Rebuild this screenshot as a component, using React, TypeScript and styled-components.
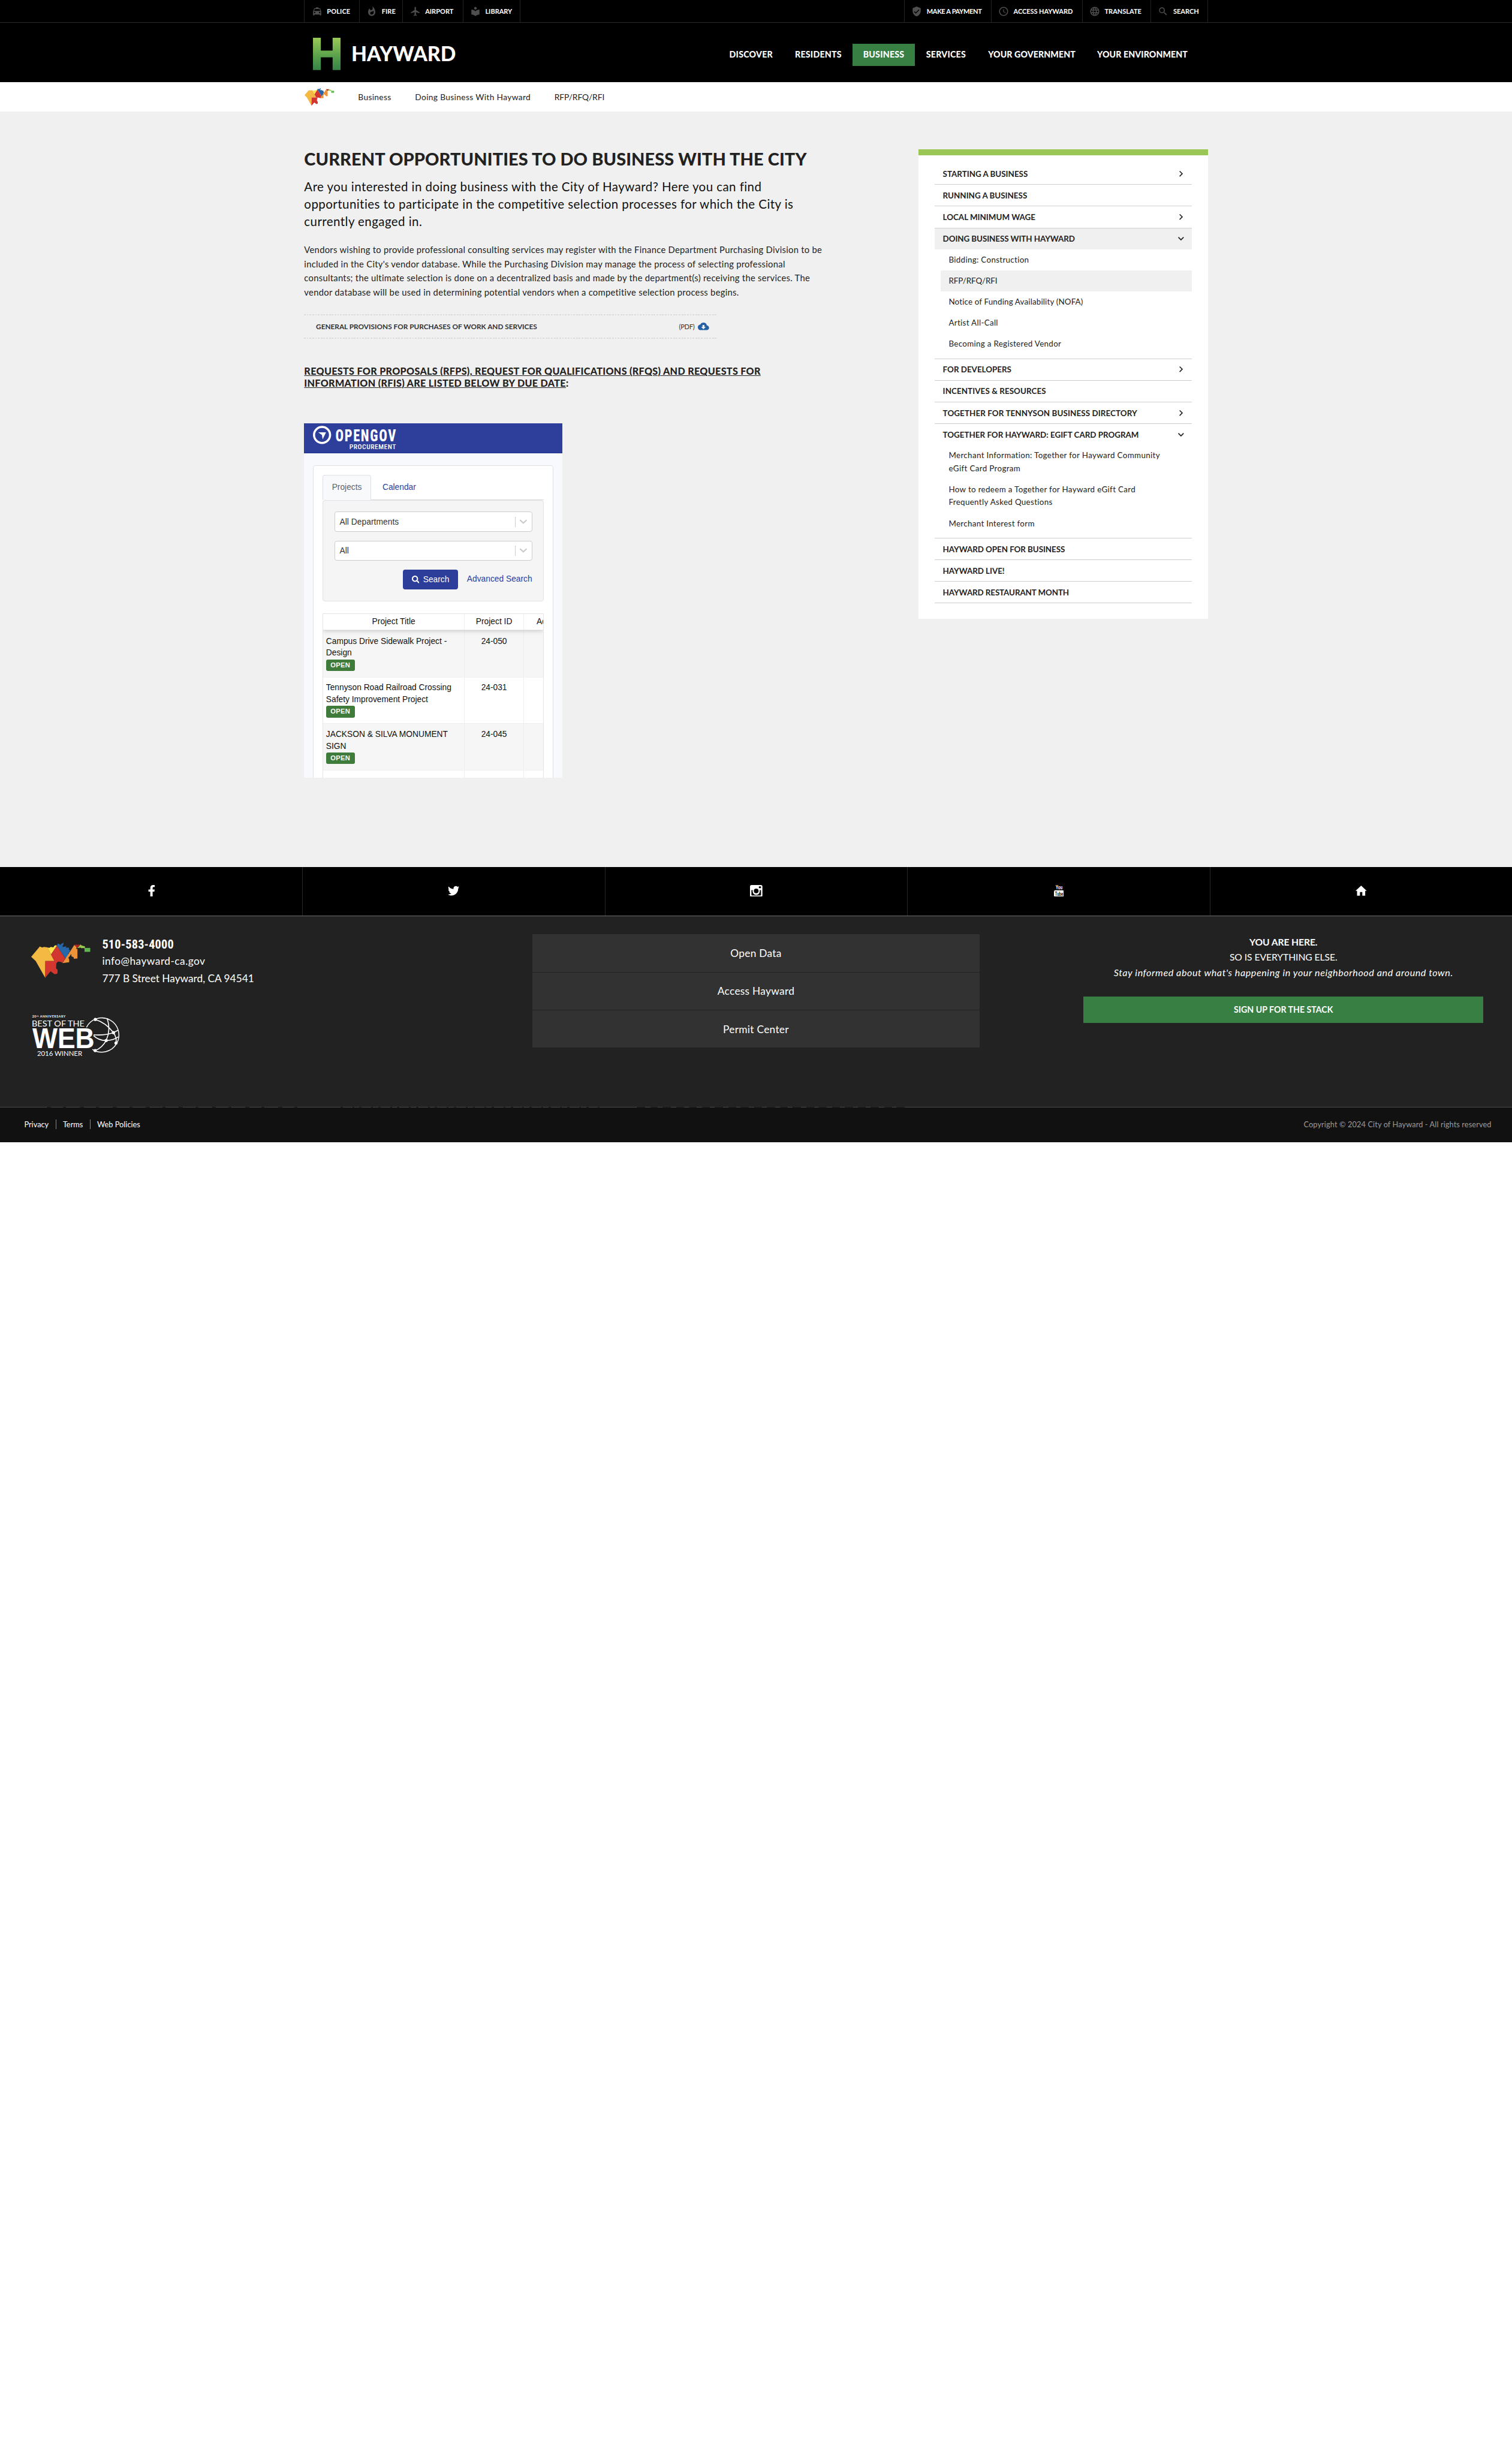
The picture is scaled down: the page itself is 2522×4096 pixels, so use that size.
import React from 'react';
import styled, { createGlobalStyle, css } from 'styled-components';
import type { IconType } from 'react-icons';
import {
  MdLocalTaxi,
  MdWhatshot,
  MdFlight,
  MdLocalLibrary,
  MdVerifiedUser,
  MdAccessTime,
  MdLanguage,
  MdSearch,
  MdCloudDownload,
  MdKeyboardArrowRight,
  MdKeyboardArrowDown,
} from 'react-icons/md';
import { FaFacebookF, FaTwitter, FaSearch } from 'react-icons/fa';

const GlobalStyle = createGlobalStyle`
  html, body { margin: 0; padding: 0; background: #fff; overflow: hidden; }
  *, *::before, *::after { box-sizing: border-box; }
  h1, h2, p, ul { margin: 0; padding: 0; font-weight: inherit; font-size: inherit; }
  ul { list-style: none; }
`;

const Page = styled.div`
  width: 2560px;
  height: 4158px;
  zoom: 0.98516;
  background: #fff;
  color: #222;
  font-family: Lato, 'Open Sans', sans-serif;
  font-size: 15px;
`;

const Container = styled.div`
  width: 1530px;
  margin: 0 auto;
  display: flex;
  justify-content: space-between;
`;

/* ---------- top utility bar ---------- */

const UtilityBar = styled.div`
  background: #000;
  height: 39px;
  border-bottom: 1px solid #2b2b2b;
`;

const UtilityGroup = styled.div`
  display: flex;
  height: 38px;
  border-right: 1px solid #222;
`;

const UtilityLink = styled.a<{ $w: number; $ls?: number }>`
  width: ${(p) => p.$w}px;
  padding-left: 11.5px;
  display: flex;
  align-items: center;
  gap: 7.6px;
  border-left: 1px solid #222;
  color: #fff;
  font-size: 11.2px;
  font-weight: 700;
  letter-spacing: ${(p) => p.$ls ?? 0}px;
  white-space: nowrap;

  svg {
    width: 18.3px;
    height: 18.3px;
    flex: none;
    color: #4f4f4f;
  }
`;

/* ---------- main header ---------- */

const Header = styled.header`
  background: #000;
  height: 100px;
`;

const HeaderInner = styled(Container)`
  height: 100px;
  align-items: center;
  padding: 0 16px 0 15px;
`;

const LogoArt = styled.svg`
  display: block;
  margin-top: 5px;
  overflow: visible;
`;

const Nav = styled.nav`
  display: flex;
  margin-top: 7px;
`;

const NavLink = styled.a<{ $w: number; $active?: boolean; $ls?: number }>`
  width: ${(p) => p.$w}px;
  height: 37.5px;
  display: flex;
  align-items: center;
  justify-content: center;
  color: #fff;
  background: ${(p) => (p.$active ? '#387f44' : 'transparent')};
  font-size: 14.4px;
  font-weight: 900;
  letter-spacing: ${(p) => p.$ls ?? 0.1}px;
  white-space: nowrap;
  padding-bottom: 1.6px;
`;

/* ---------- breadcrumb ---------- */

const CrumbBar = styled.div`
  height: 50px;
  background: #fff;
`;

const CrumbList = styled.div`
  width: 1530px;
  height: 50px;
  margin: 0 auto;
  display: flex;
  align-items: center;
  gap: 40.3px;
  font-size: 14px;

  svg {
    margin-left: 1px;
  }
`;

const Crumb = styled.span<{ $ls?: number }>`
  letter-spacing: ${(p) => p.$ls ?? 0.34}px;
`;

/* ---------- body ---------- */

const Main = styled.main`
  height: 1279px;
  background: #f0f0f0;
`;

const Article = styled.article`
  width: 890px;
  padding-top: 61.5px;
`;

const Title = styled.h1`
  font-size: 29.4px;
  line-height: 36px;
  font-weight: 900;
  letter-spacing: 0.1px;
  text-transform: uppercase;
  white-space: nowrap;
`;

const Lead = styled.p`
  margin-top: 14.6px;
  font-size: 20.8px;
  line-height: 29.7px;
  letter-spacing: 0.45px;
  color: #111;
  white-space: nowrap;
`;

const Paragraph = styled.p`
  margin-top: 21.1px;
  font-size: 15px;
  line-height: 24px;
  letter-spacing: 0.29px;
  white-space: nowrap;
`;

const dashes = css`
  repeating-linear-gradient(90deg, #dcdcdc 0 2.9px, transparent 2.9px 4.7px)
`;

const DocumentRow = styled.a`
  margin-top: 24.8px;
  width: 700px;
  height: 41px;
  padding: 0 14px 0 20px;
  display: flex;
  align-items: center;
  justify-content: space-between;
  font-size: 12px;
  font-weight: 700;
  color: #333;
  background:
    ${dashes} 0 0 / 100% 2px no-repeat,
    ${dashes} 0 100% / 100% 2px no-repeat;
`;

const DocumentType = styled.span`
  display: flex;
  align-items: center;
  gap: 6px;
  font-weight: 400;
  font-size: 11.2px;
  letter-spacing: -0.2px;

  svg {
    width: 19px;
    height: 19px;
    color: #2560a6;
  }
`;

const SectionTitle = styled.h2`
  margin-top: 45.4px;
  font-size: 16.4px;
  line-height: 20px;
  font-weight: 900;
  letter-spacing: 0.32px;
  white-space: nowrap;

  span {
    text-decoration: underline;
    text-decoration-thickness: 1.5px;
    text-underline-offset: 1.5px;
  }
`;

/* ---------- embedded procurement portal ---------- */

const Portal = styled.section`
  margin-top: 58.2px;
  width: 437px;
  height: 600px;
  overflow: hidden;
  background: #f7f9fc;
  font-family: 'Liberation Sans', Arial, sans-serif;
  font-size: 14px;
  line-height: 20px;
`;

const PortalHeader = styled.div`
  height: 51px;
  background: #2d3e9b;
  border-bottom: 1.1px solid #21368a;
  padding: 4px 15px;
`;

const PortalCard = styled.div`
  margin: 20.2px 15px 0;
  padding: 15.4px 15px 0;
  height: 560px;
  background: #fff;
  border: 1.1px solid #dee2e6;
  border-radius: 4px;
`;

const Tabs = styled.div`
  display: flex;
  height: 42px;
  border-bottom: 1.1px solid #d9d9d9;
`;

const Tab = styled.a<{ $active?: boolean }>`
  height: 42px;
  padding: 10px 15px 0;
  border: 1.1px solid transparent;
  border-radius: 4px 4px 0 0;
  color: #2c3e9e;
  margin-right: 3px;
  ${(p) =>
    p.$active &&
    css`
      color: #5d636b;
      background: #f8f9fb;
      border-color: #dee2e6;
      border-bottom-color: #f8f9fb;
    `}
`;

const Filters = styled.div`
  height: 171.4px;
  padding: 19px 19px 0;
  background: #f5f5f5;
  border: 1.1px solid #e0e2e5;
  border-radius: 4px;
`;

const SelectBox = styled.div`
  height: 34px;
  margin-bottom: 15px;
  padding: 1px 7px 0 8px;
  display: flex;
  align-items: center;
  background: #fff;
  border: 1.1px solid #ccc;
  border-radius: 4px;
  color: #333;
  letter-spacing: 0.05px;

  svg {
    margin-left: 6px;
  }
`;

const SelectDivider = styled.i`
  width: 1px;
  height: 17px;
  margin-left: auto;
  background: #ccc;
`;

const FilterActions = styled.div`
  display: flex;
  justify-content: flex-end;
  gap: 15.5px;
  color: #2c3e9e;
  line-height: 32px;
`;

const SearchButton = styled.span`
  width: 92.5px;
  height: 34px;
  display: flex;
  align-items: center;
  justify-content: center;
  gap: 6.5px;
  border-radius: 4px;
  background: #2c3e9a;
  color: #fff;
`;

const ProjectTable = styled.div`
  margin-top: 20.4px;
  height: 300px;
  border: 1.1px solid #e4e4e4;
  border-width: 1.1px 1.1px 0;
  overflow: hidden;
`;

const tableColumns = css`
  display: grid;
  grid-template-columns: 240px 100px 120px;
`;

const TableHead = styled.div`
  ${tableColumns}
  height: 27.8px;
  position: relative;
  background: #fff;
  border-bottom: 1.1px solid #eaeaea;
  box-shadow: 0 3px 7px rgba(0, 0, 0, 0.14);
  color: #111;
  text-align: center;
  line-height: 26px;
`;

const HeadCell = styled.span<{ $clipped?: boolean }>`
  border-right: 1px solid #eee;
  ${(p) =>
    p.$clipped &&
    css`
      text-align: left;
      padding-left: 21.5px;
      white-space: nowrap;
    `}
`;

const TableRow = styled.div<{ $alt?: boolean }>`
  ${tableColumns}
  height: 78.8px;
  background: ${(p) => (p.$alt ? '#fff' : '#f6f6f6')};
  border-top: 1px solid ${(p) => (p.$alt ? '#f1f1f1' : '#eee')};
  color: #111;
`;

const TitleCell = styled.div`
  padding: 7.8px 6px 0 5px;
  border-right: 1px solid #eee;
`;

const IdCell = styled.div`
  padding-top: 7.8px;
  text-align: center;
  border-right: 1px solid #eee;
`;

const Status = styled.div`
  width: 48.7px;
  height: 20px;
  margin-top: 0.5px;
  border-radius: 3px;
  background: #3f7b3a;
  color: #fff;
  font-size: 11.3px;
  font-weight: 700;
  letter-spacing: 0.35px;
  line-height: 20px;
  text-align: center;
`;

/* ---------- side navigation ---------- */

const Sidebar = styled.aside`
  width: 490px;
  height: 794.7px;
  margin-top: 64px;
  padding: 13.2px 27.3px 0;
  background: #fff;
  border-top: 10.2px solid #99c655;
`;

const SideItem = styled.li`
  border-bottom: 1.1px solid #cfcfcf;
`;

const SideLink = styled.a<{ $active?: boolean; $ls?: number }>`
  height: 35.65px;
  padding: 0 8.5px 0 14px;
  display: flex;
  align-items: center;
  justify-content: space-between;
  font-size: 13.6px;
  font-weight: 700;
  letter-spacing: ${(p) => p.$ls ?? 0}px;
  background: ${(p) => (p.$active ? '#f0f0f0' : 'transparent')};

  svg {
    width: 20px;
    height: 20px;
  }
`;

const SubList = styled.ul`
  padding: 0 0 6.4px 10px;
`;

const SubLink = styled.li<{ $active?: boolean; $ls?: number }>`
  padding: 7px 14px 6.8px;
  font-size: 13.6px;
  line-height: 21.9px;
  letter-spacing: ${(p) => p.$ls ?? 0.32}px;
  background: ${(p) => (p.$active ? '#f0f0f0' : 'transparent')};
  white-space: nowrap;
`;

/* ---------- footer ---------- */

const SocialBar = styled.div`
  height: 83px;
  display: grid;
  grid-template-columns: repeat(5, 1fr);
  background: #000;
  border-bottom: 1.1px solid #6e6e6e;
`;

const SocialLink = styled.a`
  display: flex;
  align-items: center;
  justify-content: center;
  padding-bottom: 2.4px;
  color: #fff;
  border-left: 1px solid #262626;

  &:first-child {
    border-left-color: transparent;
  }
`;

const FooterMain = styled.footer`
  height: 323px;
  display: grid;
  grid-template-columns: 901px 758px 1fr;
  background: #222;
  color: #fff;
`;

const ContactColumn = styled.div`
  padding: 33px 0 0 53px;
`;

const Contact = styled.div`
  display: flex;
  gap: 20px;
  height: 132.7px;

  svg {
    margin-top: 12px;
  }
`;

const ContactLines = styled.div`
  padding-top: 0.6px;
  font-size: 17.6px;
  line-height: 28.7px;
`;

const Phone = styled.div`
  font-family: 'Roboto Condensed', Roboto, sans-serif;
  font-weight: 700;
  font-size: 20.6px;
  letter-spacing: 0.2px;
`;

const Email = styled.div`
  letter-spacing: 0.46px;
`;

const Address = styled.div`
  letter-spacing: -0.03px;
`;

const LinkColumn = styled.div`
  padding-top: 31px;
`;

const FooterLink = styled.a`
  height: 64.2px;
  display: flex;
  align-items: center;
  justify-content: center;
  background: #323232;
  border-bottom: 1.1px solid #232323;
  font-size: 17.6px;
  letter-spacing: 0.28px;
`;

const SignupColumn = styled.div`
  padding: 30.6px 48.4px 0 175.4px;
  text-align: center;
  font-size: 16px;
  line-height: 25.6px;
  white-space: nowrap;
`;

const SignupHeading = styled.div`
  font-weight: 700;
  letter-spacing: -0.15px;
`;

const SignupSub = styled.div`
  letter-spacing: -0.11px;
`;

const SignupNote = styled.div`
  font-style: italic;
  font-size: 16.4px;
  letter-spacing: 0.57px;
`;

const SignupButton = styled.a`
  margin-top: 28.8px;
  height: 44.6px;
  display: flex;
  align-items: center;
  justify-content: center;
  background: #387f44;
  font-size: 14.4px;
  font-weight: 700;
`;

const LegalBar = styled.div`
  height: 60px;
  padding: 0 35px 1.4px 41px;
  display: flex;
  align-items: center;
  justify-content: space-between;
  font-size: 13px;
  color: #fff;
  background:
    repeating-linear-gradient(90deg, transparent 0 23px, #222 23px 30px, transparent 30px 51px, #222 51px 56px)
      56px 0 / 450px 1px no-repeat,
    repeating-linear-gradient(90deg, transparent 0 9px, #222 9px 13px, transparent 13px 29px, #222 29px 32px)
      567px 0 / 453px 1px no-repeat,
    repeating-linear-gradient(90deg, #222 0 14px, transparent 14px 23px, #222 23px 36px, transparent 36px 44px)
      1078px 0 / 454px 1px no-repeat,
    linear-gradient(#4a4a4a, #4a4a4a) 0 0 / 100% 1px no-repeat,
    #111;
`;

const LegalLinks = styled.div`
  display: flex;
  align-items: center;

  a + a {
    margin-left: 11.5px;
    padding-left: 11.5px;
    border-left: 1px solid #8a8a8a;
  }
`;

const Copyright = styled.span`
  color: #9a9a9a;
  letter-spacing: 0.09px;
`;

/* ---------- drawings ---------- */

const CityMap = ({ width }: { width: number }) => (
  <svg width={width} height={width * 0.6} viewBox="0 0 300 180">
    <path fill="#f4b942" d="M0 72 44 20l12 5 8-3 19 2 35 70H72v86L23 94z" />
    <path fill="#fce34b" d="m83 25 10 2 6-5 14 2 5-8 9-3 3 4-29 43z" />
    <path fill="#d2362f" d="m131 15 42 66-14 22-8-5-23-3-10-1-17-32z" />
    <path fill="#d2362f" d="M72 94h68l-12 10-2 26 8 8v16l-10 7-12-9-14-6-28 34z" />
    <path fill="#d2362f" d="m104 150 14-14 14 6v16l-14 2z" />
    <path fill="#2766a8" d="m131 17 3-11 9 1 4 5 8-7 10-5-2 12-6 6 8 4 14-4-3 9 9-2 8 2-2 8 8 4-6 8 8 2-14 6 4 6-16 21z" />
    <path fill="#ec9239" d="m196 48 23-36 12 10-2 10 6 1v48l-18 1-2-8-10-4-2-12-8 12-6 6 4 10v14l-34 4 16-24 12-18z" />
    <path fill="#aa2320" d="M218 11h33l-15 18z" />
    <path fill="#9bcb4e" d="m251 10 6 5 16 4v9h-20l-2-3-16 3z" />
    <path fill="#5fb64d" d="M271 27h29v20h-29z" />
  </svg>
);

const HaywardLogo = () => (
  <LogoArt width="250" height="55" viewBox="0 0 250 55">
    <defs>
      <linearGradient id="leaf" gradientUnits="userSpaceOnUse" x1="0" y1="0" x2="0" y2="55">
        <stop offset="0" stopColor="#9bca57" />
        <stop offset="0.6" stopColor="#559e4b" />
        <stop offset="1" stopColor="#388348" />
      </linearGradient>
    </defs>
    <g fill="url(#leaf)">
      <rect x="0" y="0" width="13.3" height="54.6" />
      <rect x="13" y="21.7" width="21" height="11.4" />
      <rect x="33.3" y="0" width="13.4" height="54.6" />
    </g>
    <text x="65" y="39.3" fill="#fff" fontFamily="Lato" fontWeight="900" fontSize="35" textLength="177" lengthAdjust="spacingAndGlyphs">
      HAYWARD
    </text>
  </LogoArt>
);

const OpenGovLogo = () => (
  <svg width="150" height="43" viewBox="0 0 150 43">
    <circle cx="15.4" cy="19.6" r="13.6" fill="none" stroke="#fff" strokeWidth="3.6" transform="translate(0 -4)" />
    <path fill="#fff" d="M9 11.2h13.2L16.4 23l-1.2-7.2z" />
    <g fill="#fff" fontFamily="'Roboto Condensed', Roboto">
      <text x="38" y="25.9" fontSize="27.6" fontWeight="800" letterSpacing="2" textLength="104" lengthAdjust="spacingAndGlyphs">
        OPENGOV
      </text>
      <text x="61.6" y="39.9" fontSize="11.8" fontWeight="500" textLength="79" lengthAdjust="spacing">
        PROCUREMENT
      </text>
    </g>
  </svg>
);

const BestOfWebLogo = () => (
  <svg width="150" height="73.3" viewBox="69 440 450 220">
    <g fill="none" stroke="#fff" strokeWidth="4.5">
      <path d="M350 508A87 87 0 1 1 380 620" />
      <path strokeWidth="5" d="M395 468Q450 485 487 535Q505 560 500 588M455 462Q475 520 450 575Q430 612 394 626M386 546Q440 550 487 535L511 522M386 550Q410 575 450 575Q490 573 512 556" />
    </g>
    <g fill="#fff">
      <circle cx="395" cy="468" r="8" />
      <circle cx="487" cy="535" r="8" />
      <circle cx="450" cy="575" r="8" />
      <circle cx="500" cy="588" r="8" />
      <circle cx="394" cy="626" r="8" />
      <text x="74" y="459" fontFamily="Lato" fontWeight="700" fontSize="16" textLength="169">
        20
        <tspan fontSize="9" dy="-4">th</tspan>
        <tspan dy="4"> ANNIVERSARY</tspan>
      </text>
      <text x="72" y="503" fontFamily="Lato" fontWeight="400" fontSize="43" textLength="268" lengthAdjust="spacingAndGlyphs">
        BEST OF THE
      </text>
      <text x="75" y="613" fontFamily="'Liberation Sans'" fontWeight="700" fontSize="145" textLength="316" lengthAdjust="spacingAndGlyphs">
        WEB
      </text>
      <text x="99" y="654" fontFamily="Lato" fontWeight="400" fontSize="36" textLength="229" lengthAdjust="spacingAndGlyphs">
        2016 WINNER
      </text>
    </g>
  </svg>
);

const SelectChevron = () => (
  <svg width="14" height="9" viewBox="0 0 14 9">
    <path d="M2 1.8l5 4.6 5-4.6" fill="none" stroke="#c8c8c8" strokeWidth="2.1" strokeLinecap="round" />
  </svg>
);

const InstagramIcon = () => (
  <svg width="21" height="20" viewBox="0 0 21 20">
    <rect x="0" y="0" width="21" height="20" rx="2.6" fill="#fff" />
    <path fill="#000" d="M2.4 8.6h2.2a6.2 6.2 0 1 0 11.8 0h2.2v8.1a1 1 0 0 1-1 1H3.4a1 1 0 0 1-1-1z" />
    <circle cx="10.5" cy="10" r="4" fill="#000" />
    <rect x="15" y="2.2" width="3.6" height="3.2" rx="0.7" fill="#000" />
  </svg>
);

const YoutubeIcon = () => (
  <svg width="17" height="20" viewBox="0 0 17 20" fontFamily="'Roboto Condensed', Roboto">
    <text x="3" y="7.6" fill="#fff" fontSize="9.5" fontWeight="500" textLength="11.5" lengthAdjust="spacingAndGlyphs">
      You
    </text>
    <rect x="0" y="9" width="17" height="11" rx="2.4" fill="#fff" />
    <text x="1.8" y="17.8" fill="#000" fontSize="9" fontWeight="500" textLength="13.6" lengthAdjust="spacingAndGlyphs">
      Tube
    </text>
  </svg>
);

const HomeIcon = () => (
  <svg width="19" height="17" viewBox="0 0 19 17">
    <path fill="#fff" d="M9.5 0 19 9h-2.6v8h-4.9v-6h-4v6H2.6V9H0z" />
  </svg>
);

/* ---------- data ---------- */

type Utility = { label: string; icon: IconType; w: number; ls?: number };

const services: Utility[] = [
  { label: 'POLICE', icon: MdLocalTaxi, w: 93, ls: 0.14 },
  { label: 'FIRE', icon: MdWhatshot, w: 73.5 },
  { label: 'AIRPORT', icon: MdFlight, w: 101.7 },
  { label: 'LIBRARY', icon: MdLocalLibrary, w: 97 },
];

const tools: Utility[] = [
  { label: 'MAKE A PAYMENT', icon: MdVerifiedUser, w: 147, ls: -0.33 },
  { label: 'ACCESS HAYWARD', icon: MdAccessTime, w: 154.2, ls: -0.06 },
  { label: 'TRANSLATE', icon: MdLanguage, w: 116.2 },
  { label: 'SEARCH', icon: MdSearch, w: 96 },
];

const sections = [
  { label: 'DISCOVER', w: 111.3, ls: 0.27 },
  { label: 'RESIDENTS', w: 116.3, ls: 0.25 },
  { label: 'BUSINESS', w: 105.2, ls: 0.25, active: true },
  { label: 'SERVICES', w: 105.7, ls: 0.25 },
  { label: 'YOUR GOVERNMENT', w: 185 },
  { label: 'YOUR ENVIRONMENT', w: 189.5 },
];

const projects = [
  { lines: ['Campus Drive Sidewalk Project -', 'Design'], id: '24-050' },
  { lines: ['Tennyson Road Railroad Crossing', 'Safety Improvement Project'], id: '24-031' },
  { lines: ['JACKSON & SILVA MONUMENT', 'SIGN'], id: '24-045' },
];

type Sub = { lines: string[]; active?: boolean; ls?: number };
type Side = { label: string; arrow?: boolean; active?: boolean; ls?: number; subs?: Sub[] };

const sideMenu: Side[] = [
  { label: 'STARTING A BUSINESS', arrow: true },
  { label: 'RUNNING A BUSINESS' },
  { label: 'LOCAL MINIMUM WAGE', arrow: true },
  {
    label: 'DOING BUSINESS WITH HAYWARD',
    active: true,
    ls: -0.08,
    subs: [
      { lines: ['Bidding: Construction'] },
      { lines: ['RFP/RFQ/RFI'], active: true, ls: -0.05 },
      { lines: ['Notice of Funding Availability (NOFA)'], ls: 0.16 },
      { lines: ['Artist All-Call'] },
      { lines: ['Becoming a Registered Vendor'] },
    ],
  },
  { label: 'FOR DEVELOPERS', arrow: true },
  { label: 'INCENTIVES & RESOURCES', ls: 0.08 },
  { label: 'TOGETHER FOR TENNYSON BUSINESS DIRECTORY', arrow: true, ls: 0.1 },
  {
    label: 'TOGETHER FOR HAYWARD: EGIFT CARD PROGRAM',
    subs: [
      { lines: ['Merchant Information: Together for Hayward Community', 'eGift Card Program'], ls: 0.36 },
      { lines: ['How to redeem a Together for Hayward eGift Card', 'Frequently Asked Questions'], ls: 0.34 },
      { lines: ['Merchant Interest form'] },
    ],
  },
  { label: 'HAYWARD OPEN FOR BUSINESS', ls: -0.06 },
  { label: 'HAYWARD LIVE!', ls: -0.06 },
  { label: 'HAYWARD RESTAURANT MONTH', ls: -0.1 },
];

const Lines = ({ text }: { text: string[] }) => (
  <>
    {text.map((line, i) => (
      <React.Fragment key={line}>
        {i > 0 && <br />}
        {line}
      </React.Fragment>
    ))}
  </>
);

const UtilityLinks = ({ items }: { items: Utility[] }) => (
  <UtilityGroup>
    {items.map(({ label, icon: Icon, w, ls }) => (
      <UtilityLink key={label} $w={w} $ls={ls}>
        <Icon />
        {label}
      </UtilityLink>
    ))}
  </UtilityGroup>
);

export default function App() {
  return (
    <Page>
      <GlobalStyle />
      <UtilityBar>
        <Container>
          <UtilityLinks items={services} />
          <UtilityLinks items={tools} />
        </Container>
      </UtilityBar>

      <Header>
        <HeaderInner>
          <HaywardLogo />
          <Nav>
            {sections.map((s) => (
              <NavLink key={s.label} $w={s.w} $active={s.active} $ls={s.ls}>
                {s.label}
              </NavLink>
            ))}
          </Nav>
        </HeaderInner>
      </Header>

      <CrumbBar>
        <CrumbList>
          <CityMap width={50} />
          <Crumb>Business</Crumb>
          <Crumb>Doing Business With Hayward</Crumb>
          <Crumb $ls={-0.05}>RFP/RFQ/RFI</Crumb>
        </CrumbList>
      </CrumbBar>

      <Main>
        <Container>
          <Article>
            <Title>Current Opportunities to do Business with the City</Title>
            <Lead>
              <Lines
                text={[
                  'Are you interested in doing business with the City of Hayward? Here you can find',
                  'opportunities to participate in the competitive selection processes for which the City is',
                  'currently engaged in.',
                ]}
              />
            </Lead>
            <Paragraph>
              <Lines
                text={[
                  'Vendors wishing to provide professional consulting services may register with the Finance Department Purchasing Division to be',
                  "included in the City's vendor database. While the Purchasing Division may manage the process of selecting professional",
                  'consultants; the ultimate selection is done on a decentralized basis and made by the department(s) receiving the services. The',
                  'vendor database will be used in determining potential vendors when a competitive selection process begins.',
                ]}
              />
            </Paragraph>
            <DocumentRow>
              GENERAL PROVISIONS FOR PURCHASES OF WORK AND SERVICES
              <DocumentType>
                (PDF)
                <MdCloudDownload />
              </DocumentType>
            </DocumentRow>
            <SectionTitle>
              <span>
                REQUESTS FOR PROPOSALS (RFPS), REQUEST FOR QUALIFICATIONS (RFQS) AND REQUESTS FOR
                <br />
                INFORMATION (RFIS) ARE LISTED BELOW BY DUE DATE
              </span>
              :
            </SectionTitle>

            <Portal>
              <PortalHeader>
                <OpenGovLogo />
              </PortalHeader>
              <PortalCard>
                <Tabs>
                  <Tab $active>Projects</Tab>
                  <Tab>Calendar</Tab>
                </Tabs>
                <Filters>
                  {['All Departments', 'All'].map((value) => (
                    <SelectBox key={value}>
                      {value}
                      <SelectDivider />
                      <SelectChevron />
                    </SelectBox>
                  ))}
                  <FilterActions>
                    <SearchButton>
                      <FaSearch size={13} />
                      Search
                    </SearchButton>
                    Advanced Search
                  </FilterActions>
                </Filters>
                <ProjectTable>
                  <TableHead>
                    <HeadCell>Project Title</HeadCell>
                    <HeadCell>Project ID</HeadCell>
                    <HeadCell $clipped>Addenda</HeadCell>
                  </TableHead>
                  {projects.map((p, i) => (
                    <TableRow key={p.id} $alt={i % 2 === 1}>
                      <TitleCell>
                        <Lines text={p.lines} />
                        <Status>OPEN</Status>
                      </TitleCell>
                      <IdCell>{p.id}</IdCell>
                    </TableRow>
                  ))}
                  <TableRow $alt>
                    <TitleCell />
                    <IdCell />
                  </TableRow>
                </ProjectTable>
              </PortalCard>
            </Portal>
          </Article>

          <Sidebar>
            <ul>
              {sideMenu.map((item) => (
                <SideItem key={item.label}>
                  <SideLink $active={item.active} $ls={item.ls}>
                    {item.label}
                    {item.arrow && <MdKeyboardArrowRight />}
                    {item.subs && <MdKeyboardArrowDown />}
                  </SideLink>
                  {item.subs && (
                    <SubList>
                      {item.subs.map((sub) => (
                        <SubLink key={sub.lines[0]} $active={sub.active} $ls={sub.ls}>
                          <Lines text={sub.lines} />
                        </SubLink>
                      ))}
                    </SubList>
                  )}
                </SideItem>
              ))}
            </ul>
          </Sidebar>
        </Container>
      </Main>

      <SocialBar>
        <SocialLink>
          <FaFacebookF size={20} />
        </SocialLink>
        <SocialLink>
          <FaTwitter size={19.5} />
        </SocialLink>
        <SocialLink>
          <InstagramIcon />
        </SocialLink>
        <SocialLink>
          <YoutubeIcon />
        </SocialLink>
        <SocialLink>
          <HomeIcon />
        </SocialLink>
      </SocialBar>

      <FooterMain>
        <ContactColumn>
          <Contact>
            <CityMap width={100} />
            <ContactLines>
              <Phone>510-583-4000</Phone>
              <Email>info@hayward-ca.gov</Email>
              <Address>777 B Street Hayward, CA 94541</Address>
            </ContactLines>
          </Contact>
          <BestOfWebLogo />
        </ContactColumn>
        <LinkColumn>
          <FooterLink>Open Data</FooterLink>
          <FooterLink>Access Hayward</FooterLink>
          <FooterLink>Permit Center</FooterLink>
        </LinkColumn>
        <SignupColumn>
          <SignupHeading>YOU ARE HERE.</SignupHeading>
          <SignupSub>SO IS EVERYTHING ELSE.</SignupSub>
          <SignupNote>Stay informed about what's happening in your neighborhood and around town.</SignupNote>
          <SignupButton>SIGN UP FOR THE STACK</SignupButton>
        </SignupColumn>
      </FooterMain>

      <LegalBar>
        <LegalLinks>
          <a>Privacy</a>
          <a>Terms</a>
          <a>Web Policies</a>
        </LegalLinks>
        <Copyright>Copyright © 2024 City of Hayward - All rights reserved</Copyright>
      </LegalBar>
    </Page>
  );
}
